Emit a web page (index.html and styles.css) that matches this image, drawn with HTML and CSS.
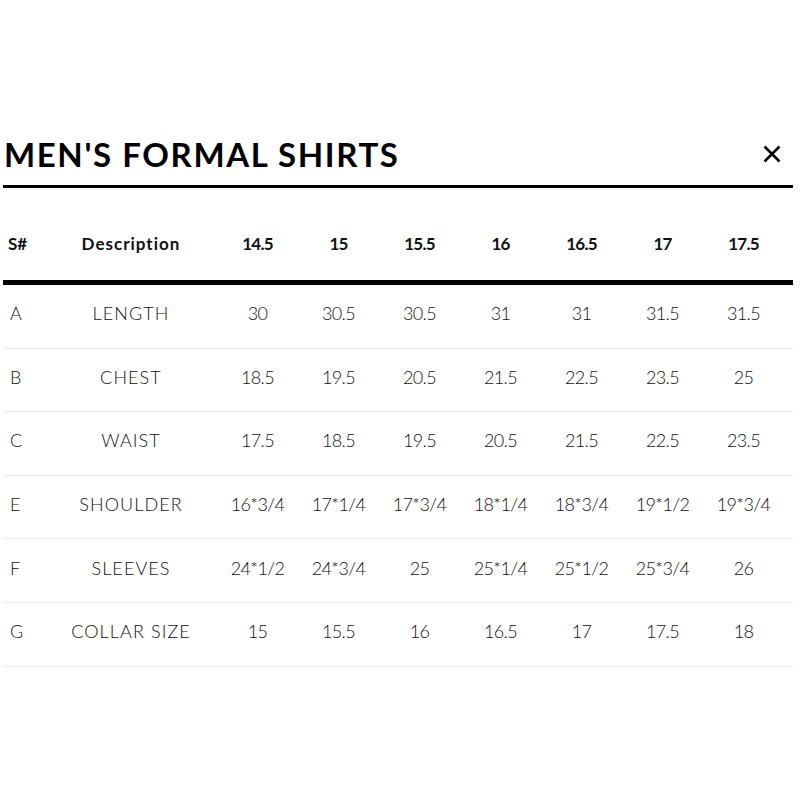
FILE: index.html
```html
<!DOCTYPE html>
<html>
<head>
<meta charset="utf-8">
<link rel="stylesheet" href="styles.css">
</head>
<body>
<div class="sheet">
  <div class="head">
    <h1 class="title">MEN'S FORMAL SHIRTS</h1>
    <button class="close" aria-label="Close">
      <svg width="18" height="18" viewBox="0 0 18 18"><path d="M1.5 1.5 L16.5 16.5 M16.5 1.5 L1.5 16.5" stroke="#000" stroke-width="2.6" fill="none"/></svg>
    </button>
  </div>
  <div class="table">
    <div class="row hrow">
      <div class="c first">S#</div><div class="c">Description</div><div class="c n">14.5</div><div class="c n">15</div><div class="c n">15.5</div><div class="c n">16</div><div class="c n">16.5</div><div class="c n">17</div><div class="c n">17.5</div><div></div>
    </div>
    <div class="row">
      <div class="c first">A</div><div class="c">LENGTH</div><div class="c n">30</div><div class="c n">30.5</div><div class="c n">30.5</div><div class="c n">31</div><div class="c n">31</div><div class="c n">31.5</div><div class="c n">31.5</div><div></div>
    </div>
    <div class="row">
      <div class="c first">B</div><div class="c">CHEST</div><div class="c n">18.5</div><div class="c n">19.5</div><div class="c n">20.5</div><div class="c n">21.5</div><div class="c n">22.5</div><div class="c n">23.5</div><div class="c n">25</div><div></div>
    </div>
    <div class="row">
      <div class="c first">C</div><div class="c">WAIST</div><div class="c n">17.5</div><div class="c n">18.5</div><div class="c n">19.5</div><div class="c n">20.5</div><div class="c n">21.5</div><div class="c n">22.5</div><div class="c n">23.5</div><div></div>
    </div>
    <div class="row">
      <div class="c first">E</div><div class="c">SHOULDER</div><div class="c n">16*3/4</div><div class="c n">17*1/4</div><div class="c n">17*3/4</div><div class="c n">18*1/4</div><div class="c n">18*3/4</div><div class="c n">19*1/2</div><div class="c n">19*3/4</div><div></div>
    </div>
    <div class="row">
      <div class="c first">F</div><div class="c">SLEEVES</div><div class="c n">24*1/2</div><div class="c n">24*3/4</div><div class="c n">25</div><div class="c n">25*1/4</div><div class="c n">25*1/2</div><div class="c n">25*3/4</div><div class="c n">26</div><div></div>
    </div>
    <div class="row">
      <div class="c first">G</div><div class="c">COLLAR SIZE</div><div class="c n">15</div><div class="c n">15.5</div><div class="c n">16</div><div class="c n">16.5</div><div class="c n">17</div><div class="c n">17.5</div><div class="c n">18</div><div></div>
    </div>
  </div>
</div>
</body>
</html>
```
FILE: styles.css
```css
html, body {
  margin: 0;
  padding: 0;
  background: #fff;
}
body {
  font-family: Lato, "Open Sans", sans-serif;
  color: #111;
}
.sheet {
  width: 790px;
  margin-left: 3px;
  padding-top: 130px;
}
.head {
  display: flex;
  justify-content: space-between;
  align-items: center;
  height: 55px;
  border-bottom: 3px solid #000;
}
.title {
  margin: 0 0 6px 1px;
  font-size: 33px;
  font-weight: 700;
  letter-spacing: 1.6px;
  line-height: 1;
  color: #000;
}
.close {
  background: none;
  border: 0;
  padding: 0;
  margin: 0 12px 8px 0;
  width: 18px;
  height: 18px;
  display: flex;
  cursor: pointer;
}
.row {
  display: grid;
  grid-template-columns: 42px 172px repeat(7, 81px) 1fr;
  align-items: center;
  height: 63.6px;
  box-sizing: border-box;
  padding-bottom: 6px;
  border-bottom: 1px solid #ebebeb;
  font-size: 18px;
  font-weight: 300;
  letter-spacing: 1.1px;
}
.row .n {
  letter-spacing: -0.6px;
}
.hrow {
  height: 97px;
  padding-top: 18px;
  padding-bottom: 0;
  border-bottom: 5px solid #000;
  font-size: 17px;
  font-weight: 700;
  letter-spacing: 1px;
}
.hrow .n {
  letter-spacing: -0.8px;
}
.c {
  text-align: center;
}
.c.first {
  text-align: left;
  padding-left: 7px;
}
.hrow .c.first {
  padding-left: 5px;
  letter-spacing: 0;
}
```
